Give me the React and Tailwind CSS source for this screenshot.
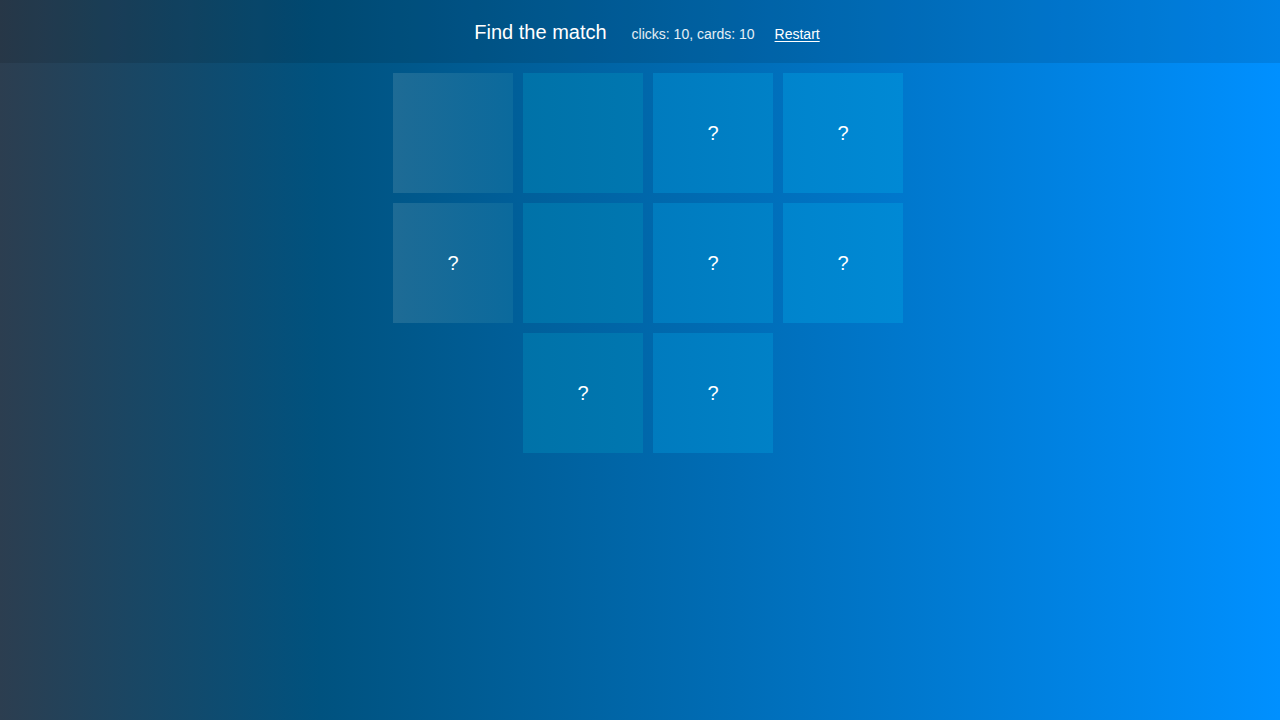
import { useState } from 'react';

// per-column card tints, written out so Tailwind picks them up
const COLUMN_BG = [
  'bg-[linear-gradient(to_right,#1e6b95,#0b6a9d)]',
  'bg-[linear-gradient(to_right,#0072a8,#0077b1)]',
  'bg-[linear-gradient(to_right,#007bbe,#0081c7)]',
  'bg-[linear-gradient(to_right,#0084cc,#0089d5)]',
];

const CARDS = [
  { id: 1, col: 0, hidden: false },
  { id: 2, col: 1, hidden: false },
  { id: 3, col: 2, hidden: true },
  { id: 4, col: 3, hidden: true },
  { id: 5, col: 0, hidden: true },
  { id: 6, col: 1, hidden: false },
  { id: 7, col: 2, hidden: true },
  { id: 8, col: 3, hidden: true },
  { id: 9, col: 1, hidden: true },
  { id: 10, col: 2, hidden: true },
];

function Card({ card }) {
  return (
    <div
      className={`flex h-[120px] w-[120px] items-center justify-center text-[20px] text-white ${COLUMN_BG[card.col]}`}
    >
      {card.hidden ? '?' : ''}
    </div>
  );
}

export default function App() {
  const [clicks] = useState(10);

  return (
    <div className="min-h-[720px] bg-[linear-gradient(to_right,#2c3e50,#00527f_25%,#0090ff)] font-['Liberation_Sans',Arial,sans-serif]">
      <header className="flex h-[63px] items-baseline justify-center bg-black/10 pl-[14px] pt-[20px]">
        <h1 className="text-[20px] leading-6 text-white">Find the match</h1>
        <span className="ml-[25px] text-sm text-white/90">
          clicks: {clicks}, cards: {CARDS.length}
        </span>
        <button className="ml-5 text-sm text-white underline underline-offset-2">Restart</button>
      </header>

      <div className="flex justify-center pl-4 pt-[10px]">
        <div className="flex w-[510px] flex-wrap justify-center gap-[10px]">
          {CARDS.map((card) => (
            <Card key={card.id} card={card} />
          ))}
        </div>
      </div>
    </div>
  );
}
